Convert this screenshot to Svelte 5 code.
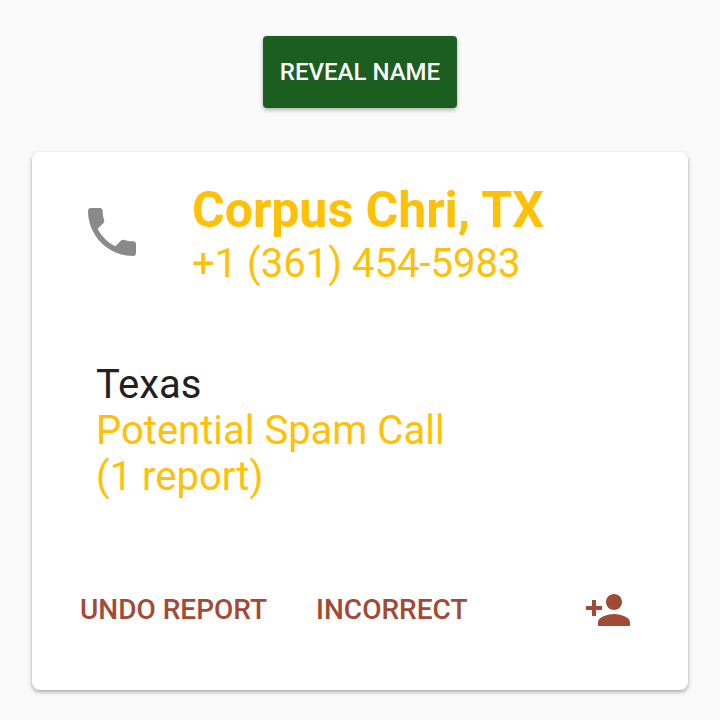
<script lang="ts">
  const caller = {
    name: "Corpus Chri, TX",
    phone: "+1 (361) 454-5983",
    region: "Texas",
  };

  let revealed = $state(false);
  let reports = $state(1);

  const revealName = () => {
    revealed = true;
  };

  const undoReport = () => {
    reports = Math.max(0, reports - 1);
  };
</script>

<main class="page">
  <button class="reveal" onclick={revealName} disabled={revealed}>REVEAL NAME</button>

  <section class="card">
    <header class="card-header">
      <svg class="phone-icon" viewBox="0 0 24 24" aria-hidden="true">
        <path
          d="M6.62 10.79c1.44 2.83 3.76 5.14 6.59 6.59l2.2-2.2c.27-.27.67-.36 1.02-.24 1.12.37 2.33.57 3.57.57.55 0 1 .45 1 1V20c0 .55-.45 1-1 1-9.39 0-17-7.61-17-17 0-.55.45-1 1-1h3.5c.55 0 1 .45 1 1 0 1.25.2 2.45.57 3.57.11.35.03.74-.25 1.02l-2.2 2.2z"
        />
      </svg>
      <div>
        <h1 class="name">{caller.name}</h1>
        <p class="phone">{caller.phone}</p>
      </div>
    </header>

    <div class="details">
      <p>{caller.region}</p>
      {#if reports > 0}
        <p class="spam">Potential Spam Call</p>
        <p class="spam">({reports} report)</p>
      {/if}
    </div>

    <footer class="actions">
      <button class="action" onclick={undoReport}>UNDO REPORT</button>
      <button class="action">INCORRECT</button>
      <button class="action add" aria-label="Add contact">
        <svg class="add-icon" viewBox="0 0 24 24" aria-hidden="true">
          <path
            d="M15 12c2.21 0 4-1.79 4-4s-1.79-4-4-4-4 1.79-4 4 1.79 4 4 4zm-9-2V7H4v3H1v2h3v3h2v-3h3v-2H6zm9 4c-2.67 0-8 1.34-8 4v2h16v-2c0-2.66-5.33-4-8-4z"
          />
        </svg>
      </button>
    </footer>
  </section>
</main>

<style>
  :global(body) {
    margin: 0;
    background: #fafafa;
  }

  .page {
    display: flex;
    flex-direction: column;
    align-items: center;
    gap: 44px;
    padding: 36px 32px 30px;
    font-family: Roboto, sans-serif;
    color: #212121;
  }

  button {
    border: none;
    font-family: inherit;
    font-weight: 500;
    cursor: pointer;
  }

  .reveal {
    height: 72px;
    padding: 0 17px;
    border-radius: 4px;
    background: #1b5e20;
    color: #fff;
    font-size: 24px;
    box-shadow: 0 2px 4px rgba(0, 0, 0, 0.3);
  }

  .card {
    box-sizing: border-box;
    width: 100%;
    padding: 32px 48px 56px;
    border-radius: 8px;
    background: #fff;
    box-shadow: 0 2px 4px rgba(0, 0, 0, 0.35);
  }

  .card-header {
    display: flex;
    align-items: flex-start;
    gap: 48px;
  }

  .phone-icon {
    flex: none;
    width: 64px;
    height: 64px;
    margin-top: 16px;
    fill: #8a8a8a;
  }

  .name,
  .phone {
    margin: 0;
    color: #ffc107;
  }

  .name {
    font-size: 50px;
    font-weight: 700;
    line-height: 52px;
  }

  .phone {
    font-size: 40px;
    line-height: 56px;
  }

  .details {
    padding: 70px 16px 86px;
    font-size: 40px;
    line-height: 46px;
  }

  .details p {
    margin: 0;
  }

  .details .spam {
    color: #ffc107;
  }

  .actions {
    display: flex;
    align-items: center;
    gap: 49px;
  }

  .action {
    padding: 0;
    background: none;
    color: #a14a35;
    font-size: 28px;
    line-height: 48px;
  }

  .add {
    display: flex;
    margin-left: auto;
    padding-right: 8px;
  }

  .add-icon {
    width: 48px;
    height: 48px;
    fill: currentColor;
  }
</style>
